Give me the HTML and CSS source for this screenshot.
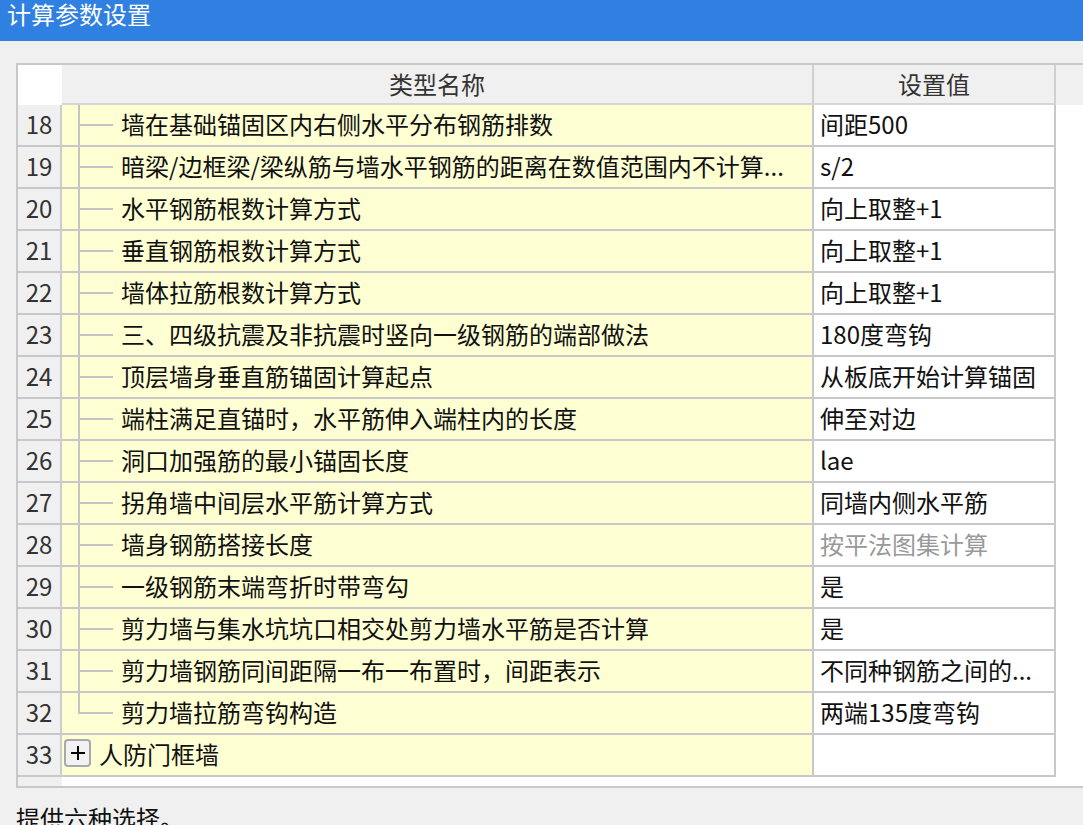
FILE: index.html
```html
<!DOCTYPE html>
<html lang="zh-CN">
<head>
<meta charset="utf-8">
<title>计算参数设置</title>
<link rel="stylesheet" href="styles.css">
</head>
<body>
<div class="titlebar">计算参数设置</div>
<div class="main">
  <div class="grid">
    <div class="row head">
      <div class="num corner"></div>
      <div class="name">类型名称</div>
      <div class="val">设置值</div>
      <div class="fill"></div>
    </div>
    <div class="row"><div class="num">18</div><div class="name"><span class="tree"></span>墙在基础锚固区内右侧水平分布钢筋排数</div><div class="val">间距500</div><div class="fill"></div></div>
    <div class="row"><div class="num">19</div><div class="name"><span class="tree"></span>暗梁/边框梁/梁纵筋与墙水平钢筋的距离在数值范围内不计算...</div><div class="val">s/2</div><div class="fill"></div></div>
    <div class="row"><div class="num">20</div><div class="name"><span class="tree"></span>水平钢筋根数计算方式</div><div class="val">向上取整+1</div><div class="fill"></div></div>
    <div class="row"><div class="num">21</div><div class="name"><span class="tree"></span>垂直钢筋根数计算方式</div><div class="val">向上取整+1</div><div class="fill"></div></div>
    <div class="row"><div class="num">22</div><div class="name"><span class="tree"></span>墙体拉筋根数计算方式</div><div class="val">向上取整+1</div><div class="fill"></div></div>
    <div class="row"><div class="num">23</div><div class="name"><span class="tree"></span>三、四级抗震及非抗震时竖向一级钢筋的端部做法</div><div class="val">180度弯钩</div><div class="fill"></div></div>
    <div class="row"><div class="num">24</div><div class="name"><span class="tree"></span>顶层墙身垂直筋锚固计算起点</div><div class="val">从板底开始计算锚固</div><div class="fill"></div></div>
    <div class="row"><div class="num">25</div><div class="name"><span class="tree"></span>端柱满足直锚时，水平筋伸入端柱内的长度</div><div class="val">伸至对边</div><div class="fill"></div></div>
    <div class="row"><div class="num">26</div><div class="name"><span class="tree"></span>洞口加强筋的最小锚固长度</div><div class="val">lae</div><div class="fill"></div></div>
    <div class="row"><div class="num">27</div><div class="name"><span class="tree"></span>拐角墙中间层水平筋计算方式</div><div class="val">同墙内侧水平筋</div><div class="fill"></div></div>
    <div class="row"><div class="num">28</div><div class="name"><span class="tree"></span>墙身钢筋搭接长度</div><div class="val muted">按平法图集计算</div><div class="fill"></div></div>
    <div class="row"><div class="num">29</div><div class="name"><span class="tree"></span>一级钢筋末端弯折时带弯勾</div><div class="val">是</div><div class="fill"></div></div>
    <div class="row"><div class="num">30</div><div class="name"><span class="tree"></span>剪力墙与集水坑坑口相交处剪力墙水平筋是否计算</div><div class="val">是</div><div class="fill"></div></div>
    <div class="row"><div class="num">31</div><div class="name"><span class="tree"></span>剪力墙钢筋同间距隔一布一布置时，间距表示</div><div class="val">不同种钢筋之间的...</div><div class="fill"></div></div>
    <div class="row"><div class="num">32</div><div class="name"><span class="tree last"></span>剪力墙拉筋弯钩构造</div><div class="val">两端135度弯钩</div><div class="fill"></div></div>
    <div class="row"><div class="num">33</div><div class="name"><span class="plus"><svg width="14" height="14" viewBox="0 0 14 14"><path d="M7 0V14M0 7H14" stroke="#000" stroke-width="2"/></svg></span>人防门框墙</div><div class="val"></div><div class="fill"></div></div>
    <div class="tail"><div class="tail-num"></div></div>
  </div>
  <div class="note">提供六种选择。</div>
</div>
</body>
</html>
```

FILE: styles.css
```css
* { box-sizing: border-box; }

html, body {
  margin: 0;
  width: 1083px;
  height: 825px;
  overflow: hidden;
  background: #f0f0f0;
  font-family: "Noto Sans CJK SC", "Microsoft YaHei", "Noto Sans", sans-serif;
  font-size: 24px;
  color: #111;
}

.titlebar {
  height: 41px;
  background: #2f80e0;
  color: #fff;
  line-height: 28px;
  padding-left: 7px;
}

.main {
  padding: 22px 0 0 16px;
}

.grid {
  border: 2px solid #c8c8cb;
  border-right: none;
  background: #fff;
}

.row {
  display: flex;
  height: 42px;
}

.num {
  width: 44px;
  flex: none;
  background: #f0f0f0;
  border-right: 2px solid #cdcdd0;
  border-bottom: 2px solid #c8c8cb;
  text-align: center;
  line-height: 38px;
  color: #333;
}

.name {
  width: 752px;
  flex: none;
  background: #ffffd4;
  border-right: 2px solid #c8c8cb;
  border-bottom: 2px solid #c8c8cb;
  display: flex;
  align-items: flex-start;
  line-height: 38px;
  white-space: nowrap;
  overflow: hidden;
}

.val {
  width: 242px;
  flex: none;
  border-right: 2px solid #c8c8cb;
  border-bottom: 2px solid #c8c8cb;
  padding-left: 6px;
  line-height: 38px;
  white-space: nowrap;
  overflow: hidden;
}

.val.muted { color: #999; }

.fill { flex: 1; }

.head { height: 40px; background: #f0f0f0; }

.head .corner {
  background: #fff;
  border: none;
}

.head .name,
.head .val {
  background: #f0f0f0;
  justify-content: center;
  text-align: center;
  padding-left: 0;
  line-height: 37px;
  color: #333;
  border-bottom: 2px solid #d6d6d8;
  border-right: 2px solid #d0d0d3;
}

.tree {
  width: 52px;
  height: 40px;
  flex: none;
  margin-right: 7px;
  background:
    linear-gradient(#c4c4c7, #c4c4c7) 16px 0 / 2px 100% no-repeat,
    linear-gradient(#c4c4c7, #c4c4c7) 18px 19px / 33px 2px no-repeat;
}

.tree.last {
  background:
    linear-gradient(#c4c4c7, #c4c4c7) 16px 0 / 2px 21px no-repeat,
    linear-gradient(#c4c4c7, #c4c4c7) 18px 19px / 33px 2px no-repeat;
}

.plus {
  width: 27px;
  height: 28px;
  flex: none;
  margin: 4px 8px 0 2px;
  border: 2px solid #a9a9ad;
  border-radius: 4px;
  background: #f2f2f2;
  display: flex;
  align-items: center;
  justify-content: center;
}

.plus svg { display: block; }

.tail {
  height: 9px;
  display: flex;
}

.tail-num {
  width: 44px;
  background: #f0f0f0;
}

.note {
  margin-top: 10px;
  line-height: 40px;
  color: #111;
}
```
